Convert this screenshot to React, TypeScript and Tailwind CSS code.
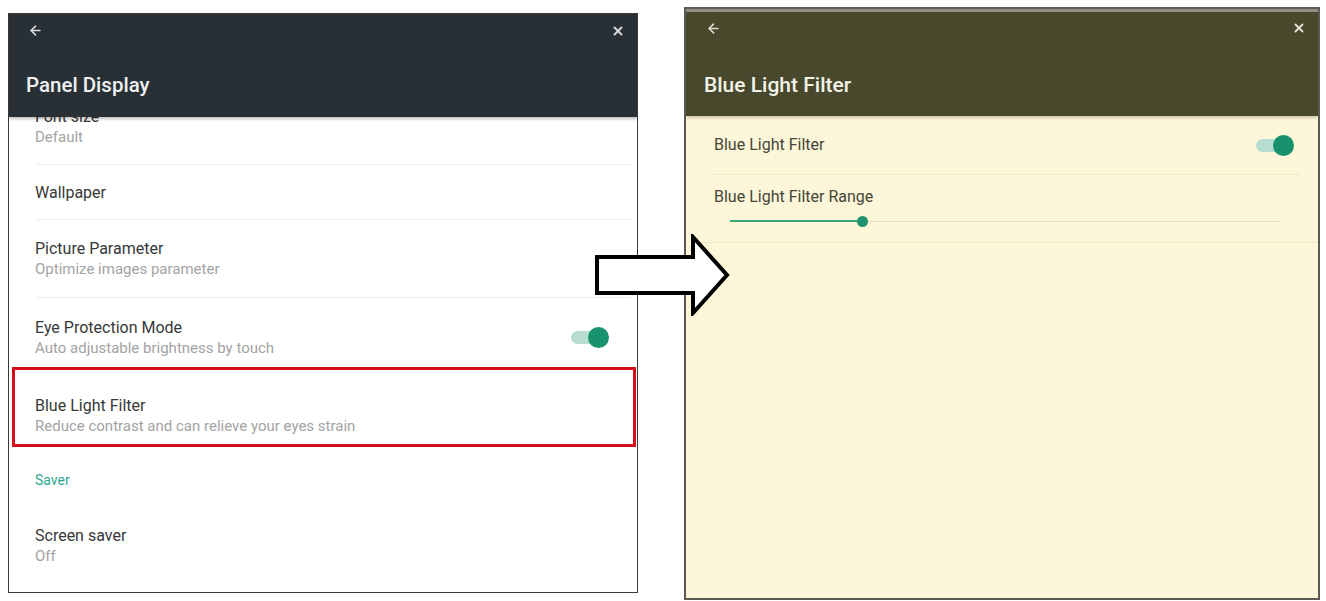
import { ArrowLeft, X } from 'lucide-react';

type RowProps = {
  title: string;
  subtitle?: string;
  height: string;
  toggle?: boolean;
};

function Toggle() {
  return (
    <div className="relative w-[38px] h-[22px] flex items-center">
      <div className="absolute left-0 right-[6px] h-[13px] rounded-full bg-[#b7ddd0]" />
      <div className="absolute right-0 w-[21px] h-[21px] rounded-full bg-[#17926d]" />
    </div>
  );
}

function SettingRow({ title, subtitle, height, toggle }: RowProps) {
  return (
    <div className={`flex items-center justify-between pl-[26px] pr-[28px] ${height}`}>
      <div className="flex flex-col gap-[1px]">
        <span className="text-[16px] leading-[21px] text-[#383838]">{title}</span>
        {subtitle && (
          <span className="text-[15px] leading-[19px] text-[#a3a3a3]">{subtitle}</span>
        )}
      </div>
      {toggle && <Toggle />}
    </div>
  );
}

function Divider() {
  return <div className="ml-[27px] mr-[6px] h-px bg-[#ececec]" />;
}

function PanelDisplay() {
  return (
    <div className="w-[630px] h-[580px] mt-[13px] ml-[8px] border border-[#3a3a3a] bg-white flex flex-col overflow-hidden shrink-0">
      {/* Header */}
      <div className="relative z-10 h-[103px] shrink-0 bg-[#283036] flex flex-col pl-[19px] pr-[12px] shadow-[0_2px_3px_rgba(0,0,0,0.25)]">
        <div className="flex items-center justify-between h-[32px] pt-[1px]">
          <ArrowLeft className="w-[15px] h-[15px] text-[#d7dadc]" strokeWidth={2.6} />
          <X className="w-[14px] h-[14px] text-[#d7dadc]" strokeWidth={3.2} />
        </div>
        <div className="mt-[24px] -ml-[2px] text-[20.5px] font-medium text-[#eef0f1]">
          Panel Display
        </div>
      </div>

      {/* Settings list, scrolled so the first row sits under the header */}
      <div className="flex-1 overflow-hidden">
        <div className="flex flex-col -mt-[29px]">
          <SettingRow title="Font size" subtitle="Default" height="h-[76px]" />
          <Divider />
          <SettingRow title="Wallpaper" height="h-[54px]" />
          <Divider />
          <SettingRow
            title="Picture Parameter"
            subtitle="Optimize images parameter"
            height="h-[77px]"
          />
          <Divider />
          <SettingRow
            title="Eye Protection Mode"
            subtitle="Auto adjustable brightness by touch"
            height="h-[79px]"
            toggle
          />
          <div className="relative">
            <SettingRow
              title="Blue Light Filter"
              subtitle="Reduce contrast and can relieve your eyes strain"
              height="h-[76px]"
            />
            <div className="absolute left-[3px] right-px -top-[10px] bottom-[6px] border-[3px] border-[#d3101a]" />
          </div>
          <div className="h-[54px] flex items-center pl-[26px]">
            <span className="text-[14px] text-[#2ba88c]">Saver</span>
          </div>
          <SettingRow title="Screen saver" subtitle="Off" height="h-[77px]" />
        </div>
      </div>
    </div>
  );
}

function BlueLightFilter() {
  const value = 0.24;
  return (
    <div className="w-[636px] h-[593px] mt-[7px] ml-[46px] border-2 border-[#5a5a52] bg-[#fdf6d8] flex flex-col overflow-hidden shrink-0">
      {/* Header */}
      <div className="h-[107px] shrink-0 bg-[#48482d] flex flex-col border-t-[3px] border-[#8e8e82] pl-[20px] pr-[12px] shadow-[0_2px_3px_rgba(0,0,0,0.2)]">
        <div className="flex items-center justify-between h-[32px]">
          <ArrowLeft className="w-[15px] h-[15px] text-[#dcdcd0]" strokeWidth={2.6} />
          <X className="w-[14px] h-[14px] text-[#e2e2d8]" strokeWidth={3.2} />
        </div>
        <div className="mt-[26px] -ml-[2px] text-[21px] font-medium text-[#f2f2e8]">Blue Light Filter</div>
      </div>

      <div className="flex flex-col">
        <div className="h-[58px] flex items-center justify-between pl-[28px] pr-[24px]">
          <span className="text-[16px] text-[#45453a]">Blue Light Filter</span>
          <Toggle />
        </div>
        <div className="ml-[28px] mr-[18px] h-px bg-[#efe7c6]" />
        <div className="h-[67px] flex flex-col pl-[28px] pr-[38px] pt-[11px]">
          <span className="text-[16px] leading-[21px] text-[#45453a]">Blue Light Filter Range</span>
          <div className="relative mt-[8px] ml-[16px] h-[12px] flex items-center">
            <div className="absolute inset-x-0 h-px bg-[#e6dfc2]" />
            <div
              className="absolute left-0 h-[2px] bg-[#3ba77b]"
              style={{ width: `${value * 100}%` }}
            />
            <div
              className="absolute w-[11px] h-[11px] -ml-[5px] rounded-full bg-[#1d9370]"
              style={{ left: `${value * 100}%` }}
            />
          </div>
        </div>
        <div className="ml-[14px] h-px bg-[#efe7c6]" />
      </div>
    </div>
  );
}

export default function App() {
  return (
    <div className="relative w-[1326px] h-[601px] bg-white flex items-start overflow-hidden font-['Roboto','Liberation_Sans',sans-serif]">
      <PanelDisplay />
      <BlueLightFilter />

      {/* Transition arrow between the two screens */}
      <svg
        className="absolute left-[595px] top-[234px]"
        width="136"
        height="82"
        viewBox="0 0 136 82"
      >
        <polygon
          points="2,23 98,23 98,3 132,41 98,79 98,59 2,59"
          fill="white"
          stroke="black"
          strokeWidth="4"
          strokeLinejoin="miter"
        />
      </svg>
    </div>
  );
}
